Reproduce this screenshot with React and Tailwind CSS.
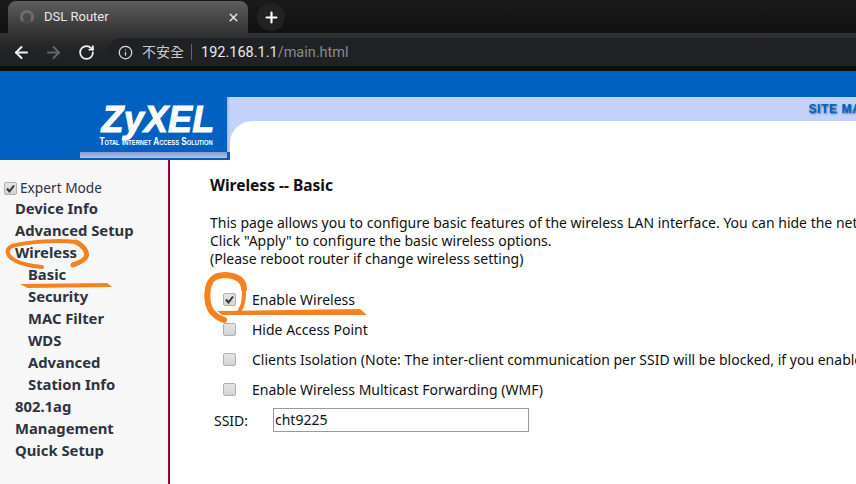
import React from "react";
import { ArrowLeft, ArrowRight, RotateCw, Info, X, Plus } from "lucide-react";

const MENU = [
  { label: "Device Info", top: true },
  { label: "Advanced Setup", top: true },
  { label: "Wireless", top: true },
  { label: "Basic" },
  { label: "Security" },
  { label: "MAC Filter" },
  { label: "WDS" },
  { label: "Advanced" },
  { label: "Station Info" },
  { label: "802.1ag", top: true },
  { label: "Management", top: true },
  { label: "Quick Setup", top: true },
];

const OPTIONS = [
  { label: "Enable Wireless", checked: true },
  { label: "Hide Access Point" },
  { label: "Clients Isolation (Note: The inter-client communication per SSID will be blocked, if you enable this)" },
  { label: "Enable Wireless Multicast Forwarding (WMF)" },
];

const Check = ({ checked }) => (
  <span className="w-[13px] h-[13px] shrink-0 rounded-[2px] border border-[#b0b0b0] bg-gradient-to-b from-[#e4e4e4] to-[#d4d4d4] flex items-center justify-center">
    {checked && (
      <svg width="11" height="11" viewBox="0 0 11 11">
        <path d="M2 5.5 L4.5 8.5 L9 2.5" fill="none" stroke="#333" strokeWidth="2" />
      </svg>
    )}
  </span>
);

const BrowserBar = () => (
  <div className="h-[71px] shrink-0 bg-[#131313] flex flex-col">
    <div className="h-[33px] flex items-end bg-gradient-to-b from-[#1a1a1a] to-[#111111]">
      <div className="ml-[8px] w-[240px] h-[32px] rounded-t-[8px] bg-gradient-to-b from-[#5e5e5e] to-[#343434] flex items-center text-[13px] text-[#e8e8e8] pl-[12px] pr-[8px] font-['Roboto',sans-serif]">
        <span className="w-[14px] h-[14px] rounded-full border-[3px] border-[#6d6d6d] border-b-[#4a4a4a] mr-[10px]"></span>
        <span className="flex-1">DSL Router</span>
        <X size={13} strokeWidth={3} className="text-[#e0e0e0]" />
      </div>
      <div className="ml-[9px] mb-[2px] w-[28px] h-[28px] rounded-full bg-[#222222] flex items-center justify-center text-white">
        <Plus size={17} strokeWidth={3} />
      </div>
    </div>
    <div className="h-[33px] pt-[5px] flex items-center bg-gradient-to-b from-[#333333] via-[#222326] to-[#202124]">
      <ArrowLeft size={19} strokeWidth={2.5} className="ml-[12px] text-[#f1f1f1]" />
      <ArrowRight size={19} strokeWidth={2.5} className="ml-[13px] text-[#666666]" />
      <RotateCw size={17} strokeWidth={2.5} className="ml-[15px] text-[#f1f1f1]" />
      <div className="ml-[13px] flex-1 h-[28px] rounded-l-full bg-[#202124] flex items-center pl-[10px]">
        <Info size={15} strokeWidth={2} className="text-[#dcdcdc]" />
        <span className="ml-[9px] -mt-[1px] text-[14px] text-[#c8c8c8] font-['Noto_Sans_CJK_TC',sans-serif]">不安全</span>
        <span className="ml-[7px] w-px h-[16px] bg-[#666666]"></span>
        <span className="ml-[9px] mt-[1px] text-[14.5px] text-[#e8eaed] font-['Roboto',sans-serif]">
          192.168.1.1<span className="text-[#8a8b8d]">/main.html</span>
        </span>
      </div>
    </div>
    <div className="flex-1 bg-[#0e0e0e]"></div>
  </div>
);

const Header = () => (
  <div className="h-[89px] shrink-0 flex bg-[#0061c1]">
    <div className="w-[230px] shrink-0 pt-[26px] pl-[80px] flex items-start">
      <div className="w-[147px] flex flex-col">
        <div className="h-[55px] flex flex-col items-center text-white font-['Liberation_Sans',sans-serif]">
          <span className="mt-[7px] ml-[9px] text-[36px] leading-[32px] font-bold italic tracking-[0.2px] [-webkit-text-stroke:1px_white]">ZyXEL</span>
          <span className="ml-[5px] mt-[1px] text-[10px] leading-[9px] font-bold [font-variant:small-caps] scale-x-[0.82] whitespace-nowrap">
            Total Internet Access Solution
          </span>
        </div>
        <div className="h-[6px] bg-gradient-to-b from-[#8a9bc8] to-[#b4c4ec]"></div>
      </div>
      <div className="w-[3px] h-[55px] bg-gradient-to-r from-[#a9b6d8] to-[#c3d2fd]"></div>
    </div>
    <div className="flex-1 flex flex-col pt-[26px]">
      <div className="flex-1 bg-[#c3d2fd]">
        <div className="h-[24px] flex items-center justify-end overflow-hidden">
          <span className="mr-[-14px] text-[12px] font-bold tracking-[0.6px] text-[#0061c1] [text-shadow:1px_1px_2px_#3f5f92] font-['Liberation_Sans',sans-serif] whitespace-nowrap">
            SITE MAP
          </span>
        </div>
        <div className="h-[39px] bg-white rounded-tl-[22px]"></div>
      </div>
    </div>
  </div>
);

const Sidebar = () => (
  <div className="w-[170px] shrink-0 bg-[#f7f7f7] border-r-2 border-[#a00030] pt-[19px] text-[#2d3340]">
    <div className="flex items-center h-[18px] pl-[4px] text-[13.7px] gap-[3px]">
      <Check checked />
      <span>Expert Mode</span>
    </div>
    <div className="font-bold text-[14.8px]">
      {MENU.map((item) => (
        <div key={item.label} className={item.top ? "h-[22px] leading-[22px] pl-[15px]" : "h-[22px] leading-[22px] pl-[28px]"}>
          {item.label}
        </div>
      ))}
    </div>
  </div>
);

const Content = () => (
  <div className="flex-1 min-w-0 bg-white pl-[40px] pt-[16px] text-[14px] text-[#111111] overflow-hidden">
    <div className="font-bold h-[18px] leading-[18px] text-[15.5px] text-[#111]">Wireless -- Basic</div>
    <div className="mt-[20px] leading-[18px] whitespace-nowrap">
      <div>This page allows you to configure basic features of the wireless LAN interface. You can hide the network</div>
      <div>Click "Apply" to configure the basic wireless options.</div>
      <div>(Please reboot router if change wireless setting)</div>
    </div>
    <div className="mt-[16px] flex flex-col">
      {OPTIONS.map((opt) => (
        <div key={opt.label} className="h-[30px] flex items-center whitespace-nowrap pl-[13px]">
          <Check checked={opt.checked} />
          <span className="ml-[16px]">{opt.label}</span>
        </div>
      ))}
    </div>
    <div className="flex items-center mt-[4px] h-[24px] pl-[4px]">
      <span className="w-[59px]">SSID:</span>
      <div className="w-[256px] h-[24px] border border-[#9a9a9a] pl-[1px] leading-[22px]">cht9225</div>
    </div>
    <div className="mt-[47px] font-bold whitespace-nowrap pl-[6px]">Wireless - Guest/Virtual Access Points:</div>
  </div>
);

const Marks = () => (
  <svg className="absolute left-0 top-0 pointer-events-none" width="856" height="484" viewBox="0 0 856 484">
    <g fill="none" stroke="#f5821f" strokeLinecap="round" strokeLinejoin="round">
      <path d="M76 242 C60 240 30 241 12 246 C4 250 8 257 16 261 C24 265 32 266 42 267" strokeWidth="4" />
      <path d="M76 242 C84 246 88 252 86 257 C84 261 78 263 73 265" strokeWidth="5" />
      <path d="M244 289 C244 281 238 276 226 275 C214 275 210 280 208 288 C206 298 208 309 214 314 C217 317 220 319 224 320" strokeWidth="6" />
      <path d="M244 292 C244 300 243 306 240 310" strokeWidth="4" />
    </g>
    <polygon points="20,284 107,283 112,287 28,288" fill="#f5821f" />
    <polygon points="217,311 360,309 367,315 222,315" fill="#f5821f" />
  </svg>
);

export default function App() {
  return (
    <div className="relative w-[856px] h-[484px] overflow-hidden flex flex-col bg-white font-['Noto_Sans',sans-serif]">
      <BrowserBar />
      <Header />
      <div className="flex-1 min-h-0 flex">
        <Sidebar />
        <Content />
      </div>
      <Marks />
    </div>
  );
}
